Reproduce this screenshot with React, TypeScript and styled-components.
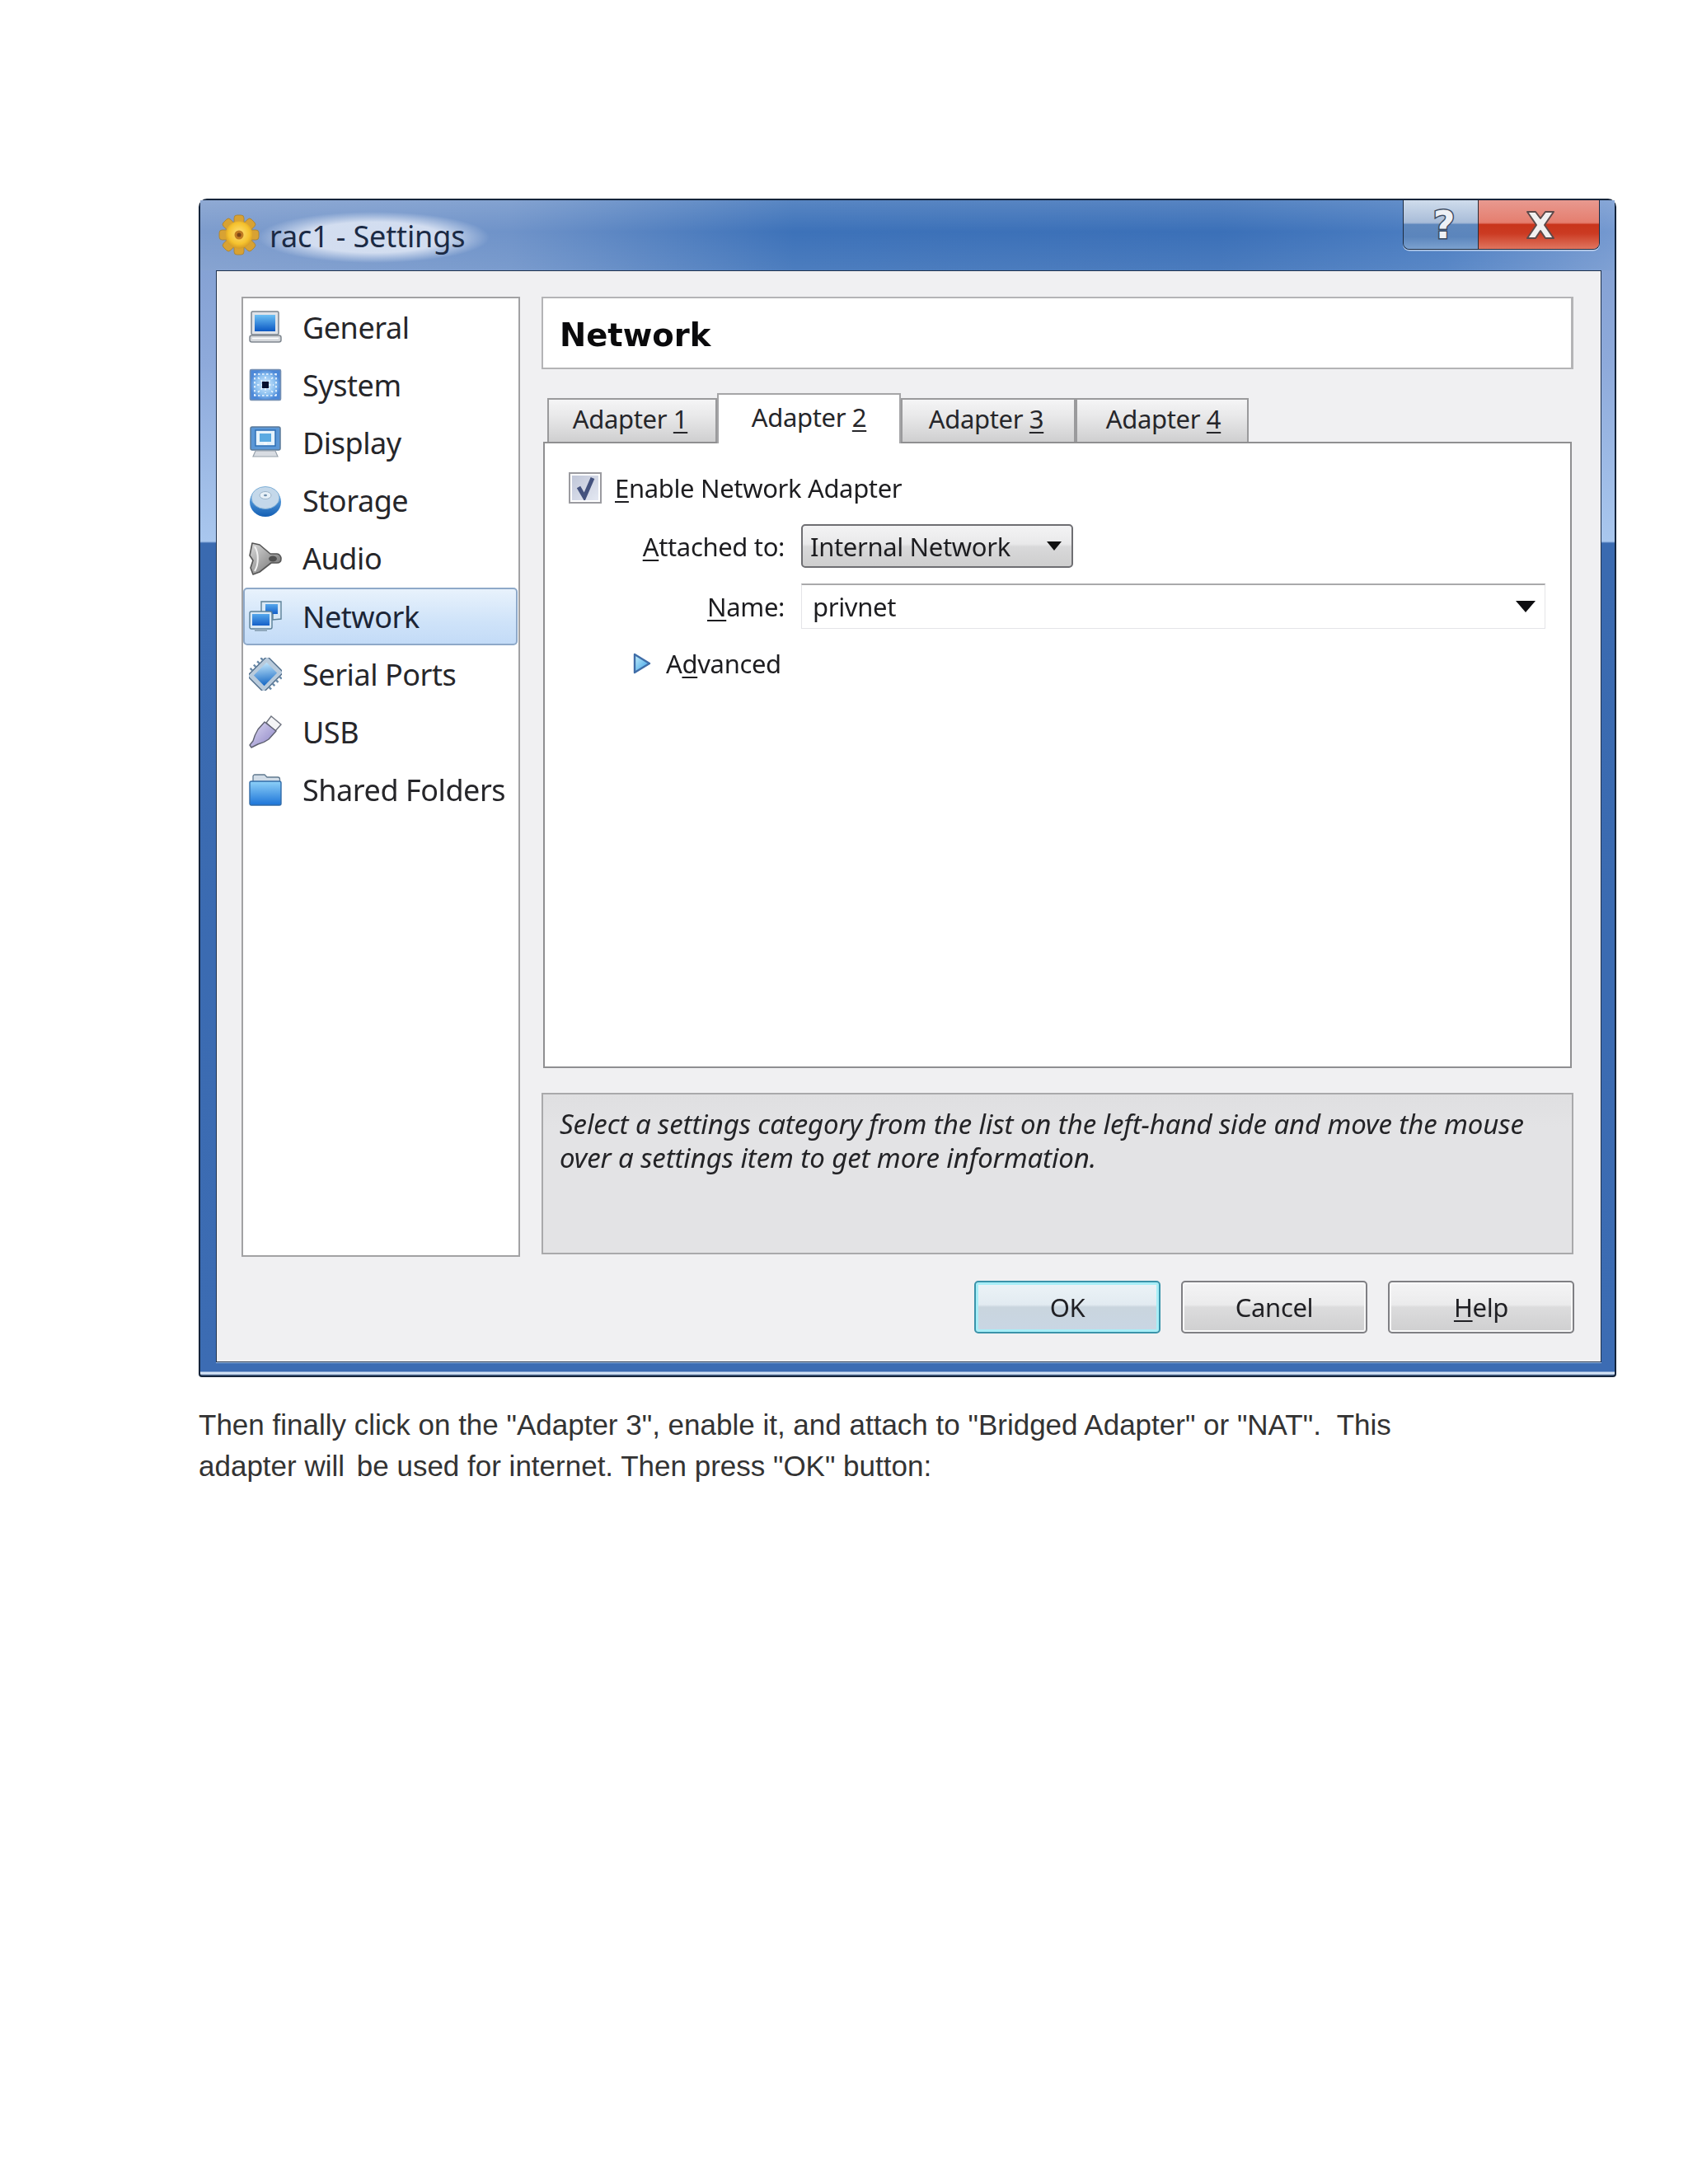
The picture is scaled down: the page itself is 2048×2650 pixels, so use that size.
import React from "react";
import styled, { createGlobalStyle, css } from "styled-components";

const Global = createGlobalStyle`
  html, body { margin: 0; padding: 0; background: #fff; }
  body { font-family: "Noto Sans", "Open Sans", sans-serif; }
  * { box-sizing: border-box; }
`;

const Page = styled.main`
  width: 2048px;
  height: 2650px;
  padding: 241px 87px 0 241px;
  background: #fff;
`;

const Dialog = styled.section`
  width: 1720px;
  height: 1430px;
  border: 2px solid #14243a;
  border-radius: 10px 10px 4px 4px;
  padding: 0 16px 16px 19px;
  display: flex;
  flex-direction: column;
  filter: blur(0.55px);
  background: linear-gradient(180deg, #7f9ccf 0, #8eaadb 200px, #a9c7ee 414px, #3a6ab0 416px, #3c6cb3 1421px, #d5e4f6 1422px, #d5e4f6 1424px, #2b4a78 1426px);
  color: #1d1d20;
`;

const TitleBar = styled.header`
  height: 85px;
  margin: 0 -16px 0 -19px;
  padding: 0 18px 0 22px;
  display: flex;
  justify-content: space-between;
  align-items: flex-start;
  background:
    linear-gradient(180deg, rgba(255,255,255,.14) 0, rgba(255,255,255,0) 45%, rgba(255,255,255,.08) 100%),
    linear-gradient(90deg, #7d9ccd 0, #6f93c9 22%, #3d72b9 42%, #3b70b8 72%, #4c7ec2 88%, #7599d0 100%);
`;

const TitleGroup = styled.div`
  display: flex;
  align-items: center;
  gap: 12px;
  height: 84px;
`;

const GearIcon = styled.svg`
  width: 50px;
  height: 50px;
`;

const TitleText = styled.h1`
  margin: 5px 0 0 -14px;
  padding: 8px 30px 10px 14px;
  font-size: 36px;
  line-height: 44px;
  font-weight: 400;
  letter-spacing: -0.15px;
  color: #1b2a44;
  background: radial-gradient(ellipse closest-side, rgba(226,233,246,.85) 60%, rgba(226,233,246,0) 100%);
`;

const WindowControls = styled.div`
  display: flex;
  height: 60px;
  border: 1.5px solid #1d2c42;
  border-top: none;
  border-radius: 0 0 8px 8px;
  overflow: hidden;
  box-shadow: 0 1.5px 0 rgba(220,232,248,.75);
`;

const ControlButton = styled.div<{ $close?: boolean }>`
  height: 100%;
  display: flex;
  align-items: center;
  justify-content: center;
  width: ${(p) => (p.$close ? 147 : 90)}px;
  ${(p) =>
    p.$close
      ? css`
          border-left: 1.5px solid #2b2c36;
          background: linear-gradient(180deg, #e8998f 0, #e57e6f 46%, #c9351c 50%, #cb3a22 68%, #e0755f 100%);
        `
      : css`
          background: linear-gradient(180deg, #cfdcec 0, #a8bcd8 46%, #5f88bd 50%, #5b85bc 75%, #7ba1cf 100%);
        `}
`;

const HelpGlyph = styled.span`
  font-family: "DejaVu Sans", sans-serif;
  font-weight: 700;
  font-size: 46px;
  line-height: 1;
  margin-left: 8px;
  color: #eef1f6;
  -webkit-text-stroke: 3px #3c4a60;
  paint-order: stroke fill;
`;

const CloseIcon = styled.svg`
  width: 38px;
  height: 36px;
  margin-left: 3px;
`;

const Client = styled.div`
  flex: 1;
  border: 1px solid #20324d;
  background: #f0f0f2;
  padding: 31px 33px 0 30px;
  display: flex;
  flex-direction: column;
  box-shadow: 0 1px 0 #9ec0e8;
`;

const Body = styled.div`
  display: grid;
  grid-template-columns: 338px 1252px;
  column-gap: 26px;
`;

const CategoryList = styled.nav`
  height: 1165px;
  background: #fff;
  border: 2px solid #a2a2a4;
  display: flex;
  flex-direction: column;
`;

const CategoryRow = styled.div<{ $active?: boolean }>`
  height: 70.2px;
  flex: none;
  display: flex;
  align-items: center;
  gap: 25px;
  padding-left: 5px;
  margin-right: 1px;
  font-size: 36px;
  letter-spacing: -0.45px;
  color: #26262a;
  border-radius: 5px;
  border: 2px solid transparent;
  ${(p) =>
    p.$active &&
    css`
      color: #1c2536;
      border-color: #8ea9c9;
      background: linear-gradient(180deg, #e8f2fc 0, #cfe3f9 60%, #c3dbf7 100%);
    `}
`;

const CategoryIcon = styled.svg`
  width: 40px;
  height: 40px;
  flex: none;
`;

const MainColumn = styled.div`
  display: flex;
  flex-direction: column;
`;

const PageHeader = styled.div`
  height: 88px;
  background: #fff;
  border: 2px solid #b4b4b6;
  border-right-width: 3px;
  padding: 5px 0 0 20px;
  display: flex;
  align-items: center;
`;

const PageHeading = styled.h2`
  margin: 0;
  font-family: "DejaVu Sans", sans-serif;
  font-weight: 700;
  font-size: 38.5px;
  color: #0a0a0c;
`;

const TabStrip = styled.div`
  margin: 29px 0 0 7px;
  height: 59px;
  display: flex;
  align-items: flex-end;
  position: relative;
  z-index: 1;
`;

const Tab = styled.div<{ $active?: boolean; $w: number; $shift?: number }>`
  width: ${(p) => p.$w}px;
  display: flex;
  justify-content: center;
  align-items: center;
  font-size: 31px;
  letter-spacing: -0.35px;
  color: #26262a;
  ${(p) =>
    p.$active
      ? css`
          height: 61px;
          margin-bottom: -2px;
          padding-bottom: 6px;
          background: #fff;
          border: 2px solid #a5a5a7;
          border-bottom: none;
        `
      : css`
          height: 53px;
          padding-bottom: 5px;
          padding-right: ${p.$shift ?? 0}px;
          padding-left: ${p.$shift ? 0 : 3}px;
          background: linear-gradient(180deg, #f5f5f6 0, #e8e8e9 40%, #cfcfd0 100%);
          border: 2px solid #9a9a9c;
          border-bottom: none;
        `}
`;

const Pane = styled.div`
  margin-left: 2px;
  width: 1248px;
  height: 760px;
  background: #fff;
  border: 2px solid #8f8f91;
  padding: 35px 20px 0 29px;
  display: flex;
  flex-direction: column;
`;

const CheckRow = styled.div`
  display: flex;
  align-items: center;
  gap: 16px;
  height: 38px;
  font-size: 31px;
  letter-spacing: -0.35px;
`;

const CheckBox = styled.span`
  width: 40px;
  height: 38px;
  flex: none;
  border: 2px solid #9b9ba0;
  padding: 2px;
  background: #fff;
  display: block;
`;

const CheckFill = styled.svg`
  width: 100%;
  height: 100%;
  display: block;
`;

const FormGrid = styled.div`
  display: grid;
  grid-template-columns: 262px 903px;
  column-gap: 20px;
  row-gap: 19px;
  margin-top: 25px;
  font-size: 31px;
  letter-spacing: -0.35px;
  align-items: center;
`;

const FieldLabel = styled.label`
  text-align: right;
`;

const Mnemonic = styled.span`
  text-decoration: underline;
  text-decoration-thickness: 2px;
  text-underline-offset: 4px;
`;

const ComboButton = styled.div`
  width: 330px;
  height: 53px;
  border: 2px solid #6e6e72;
  border-radius: 5px;
  background: linear-gradient(180deg, #f3f3f4 0, #e9e9ea 45%, #d9d9da 52%, #cecece 100%);
  padding: 0 12px 0 9px;
  display: flex;
  justify-content: space-between;
  align-items: center;
`;

const ComboField = styled.div`
  height: 55px;
  background: #fff;
  border: 1.5px solid #e4e4e8;
  border-top: 2px solid #a9a9ab;
  padding: 0 11px 0 13px;
  display: flex;
  justify-content: space-between;
  align-items: center;
`;

const ArrowIcon = styled.svg<{ $w: number; $h: number }>`
  width: ${(p) => p.$w}px;
  height: ${(p) => p.$h}px;
  flex: none;
`;

const AdvancedRow = styled.div`
  margin: 21px 0 0 78px;
  display: flex;
  align-items: center;
  gap: 18px;
  font-size: 31px;
  letter-spacing: -0.35px;
`;

const Triangle = styled.svg`
  width: 22px;
  height: 26px;
`;

const Description = styled.div`
  margin-top: 30px;
  height: 196px;
  background: linear-gradient(180deg, #dfdfe1 0, #e3e3e5 40px);
  border: 2px solid #a9a9ab;
  padding: 15px 20px 0 20px;
  font-size: 33px;
  line-height: 41px;
  font-style: italic;
  letter-spacing: -0.1px;
  color: #232326;
  white-space: nowrap;
`;

const ButtonRow = styled.div`
  margin-top: 29px;
  margin-right: -1px;
  display: flex;
  justify-content: flex-end;
  gap: 25px;
`;

const DialogButton = styled.button<{ $default?: boolean }>`
  width: 226px;
  flex: none;
  height: 64px;
  padding: 0;
  font: inherit;
  font-size: 31px;
  letter-spacing: -0.35px;
  color: #202024;
  border-radius: 5px;
  ${(p) =>
    p.$default
      ? css`
          border: 2px solid #3a93aa;
          background: linear-gradient(180deg, #ecf3f7 0, #e2ebf1 45%, #c9d5de 50%, #c9d6e4 100%);
          box-shadow: inset 0 0 0 3px #a8eef7;
        `
      : css`
          border: 2px solid #7f7f83;
          background: linear-gradient(180deg, #f4f4f5 0, #ebebec 45%, #dcdcdd 50%, #cfcfd0 100%);
          box-shadow: inset 0 0 0 2px #f8f8f8;
        `}
`;

const Caption = styled.div`
  margin-top: 33px;
  font-family: "Liberation Sans", Arial, sans-serif;
  font-size: 35px;
  line-height: 50px;
  color: #333;
`;

const CaptionLine = styled.p<{ $gap?: number }>`
  margin: 0;
  white-space: pre;
`;

const WordGap = styled.span`
  display: inline-block;
  width: 5px;
`;

const Gear = () => (
  <GearIcon viewBox="0 0 50 50">
    <defs>
      <radialGradient id="gearG" cx="50%" cy="45%" r="55%">
        <stop offset="0" stopColor="#ffe27a" />
        <stop offset="0.7" stopColor="#f5c22e" />
        <stop offset="1" stopColor="#d49a26" />
      </radialGradient>
    </defs>
    {[0, 45, 90, 135, 180, 225, 270, 315].map((a) => (
      <rect key={a} x="19" y="1" width="12" height="14" rx="3.5" transform={`rotate(${a} 25 25)`} fill="#d8a233" stroke="#a9802f" strokeWidth="0.8" />
    ))}
    <circle cx="25" cy="25" r="16.5" fill="url(#gearG)" />
    <circle cx="25" cy="25" r="5.5" fill="#c07a22" />
    <circle cx="25" cy="25" r="2.5" fill="#7a4416" />
  </GearIcon>
);

const Laptop = () => (
  <CategoryIcon viewBox="0 0 40 40">
    <defs>
      <linearGradient id="lapG" x1="0" y1="0" x2="0" y2="1">
        <stop offset="0" stopColor="#6cc0f4" />
        <stop offset="1" stopColor="#0b58c4" />
      </linearGradient>
    </defs>
    <rect x="3" y="1" width="33" height="28" rx="1.5" fill="#dfe3e8" stroke="#7a848e" strokeWidth="1.5" />
    <rect x="7" y="5" width="25" height="20" fill="url(#lapG)" />
    <rect x="1" y="30" width="38" height="8" rx="2.5" fill="#d4d7db" stroke="#808890" strokeWidth="1.5" />
    <path d="M4 33.5h32" stroke="#fff" strokeWidth="1.5" />
  </CategoryIcon>
);

const Chip = () => (
  <CategoryIcon viewBox="0 0 40 40">
    <defs>
      <radialGradient id="chipG">
        <stop offset="0" stopColor="#d6ecff" />
        <stop offset="0.65" stopColor="#8cc0f0" />
        <stop offset="1" stopColor="#4c88d8" />
      </radialGradient>
    </defs>
    <rect x="1.5" y="1.5" width="37" height="37" rx="1.5" fill="url(#chipG)" stroke="#7690b2" strokeWidth="1.6" />
    <g stroke="#f2f9ff" strokeWidth="1.6" strokeDasharray="2.5 2.5">
      <path d="M6 7h28M6 33h28M7 6v28M33 6v28" />
      <path d="M11 11l6 6M29 11l-6 6M11 29l6-6M29 29l-6-6M20 10v6M20 24v6M10 20h6M24 20h6" />
    </g>
    <rect x="16" y="16" width="8" height="8" fill="#06102e" />
  </CategoryIcon>
);

const Monitor = () => (
  <CategoryIcon viewBox="0 0 40 40">
    <rect x="2" y="1" width="36" height="28" rx="2" fill="#5b97d6" stroke="#5b7a98" strokeWidth="1.5" />
    <rect x="8" y="5" width="24" height="19" fill="#e6f3fc" stroke="#2f70b6" strokeWidth="1.5" />
    <rect x="13" y="9" width="14" height="10" fill="#5aaae2" />
    <path d="M18 20h4v3h-4z" fill="#f4f8fb" />
    <path d="M8 30h24l3 7H5z" fill="#d8dce2" stroke="#98a2ac" strokeWidth="1.2" />
  </CategoryIcon>
);

const Disk = () => (
  <CategoryIcon viewBox="0 0 40 40">
    <defs>
      <linearGradient id="diskG" x1="0" y1="0" x2="0" y2="1">
        <stop offset="0" stopColor="#7abcf0" />
        <stop offset="1" stopColor="#145fb4" />
      </linearGradient>
    </defs>
    <ellipse cx="20" cy="21" rx="19" ry="18" fill="url(#diskG)" />
    <ellipse cx="20" cy="16" rx="17" ry="13.5" fill="#c4d8ea" stroke="#7fb0d8" strokeWidth="1" />
    <ellipse cx="20" cy="13" rx="7" ry="4.5" fill="#e8f1f8" stroke="#9cb4ca" strokeWidth="1" />
    <ellipse cx="20" cy="13" rx="2" ry="1.3" fill="#6f8fac" />
  </CategoryIcon>
);

const Speaker = () => (
  <CategoryIcon viewBox="0 0 40 40">
    <defs>
      <linearGradient id="spkG" x1="0" y1="0" x2="1" y2="1">
        <stop offset="0" stopColor="#dcdcdc" />
        <stop offset="1" stopColor="#6a6a6a" />
      </linearGradient>
    </defs>
    <path d="M4 1l9 2 13 11h8c3 0 5 3 5 6s-2 5-5 5h-7L13 36l-8 3-3-8 3-9-4-6z" fill="url(#spkG)" stroke="#565656" strokeWidth="1.6" strokeLinejoin="round" />
    <path d="M7 5c5 8 5 22 0 30" fill="none" stroke="#f2f2f2" strokeWidth="2" />
    <ellipse cx="29" cy="20" rx="5" ry="3.5" fill="#505050" />
  </CategoryIcon>
);

const NetIcon = () => (
  <CategoryIcon viewBox="0 0 40 40">
    <defs>
      <linearGradient id="netG" x1="0" y1="0" x2="0" y2="1">
        <stop offset="0" stopColor="#55a7ec" />
        <stop offset="1" stopColor="#1560c8" />
      </linearGradient>
    </defs>
    <path d="M15 2h24v21l-10 1v-7l-14-1z" fill="#d9e9f6" stroke="#5c8098" strokeWidth="1.4" />
    <rect x="20" y="5" width="15" height="12" fill="url(#netG)" />
    <rect x="1" y="14" width="27" height="21" rx="2" fill="#d9e9f6" stroke="#5c8098" strokeWidth="1.4" />
    <rect x="4" y="17" width="21" height="14" fill="url(#netG)" />
    <path d="M7 35h15v3H7z" fill="#90a8bc" />
  </CategoryIcon>
);

const Serial = () => (
  <CategoryIcon viewBox="0 0 40 40">
    <defs>
      <linearGradient id="serG" x1="0" y1="0" x2="1" y2="1">
        <stop offset="0" stopColor="#bfe4fa" />
        <stop offset="1" stopColor="#1467c4" />
      </linearGradient>
    </defs>
    <g transform="rotate(45 20 20)">
      <rect x="6" y="3" width="28" height="34" rx="2" fill="#b9cbdc" stroke="#4f6c8a" strokeWidth="1.4" />
      <rect x="11" y="9" width="18" height="22" fill="url(#serG)" />
      <path d="M2 10h4M2 16h4M2 22h4M2 28h4M34 10h4M34 16h4M34 22h4M34 28h4" stroke="#6a8aa8" strokeWidth="2.4" />
    </g>
  </CategoryIcon>
);

const Usb = () => (
  <CategoryIcon viewBox="0 0 40 40">
    <defs>
      <linearGradient id="usbG" x1="0" y1="0" x2="1" y2="1">
        <stop offset="0" stopColor="#e0dcf4" />
        <stop offset="1" stopColor="#8a82c4" />
      </linearGradient>
    </defs>
    <path d="M27 1l12 10-7 8-11-10z" fill="#f4f4f6" stroke="#6f7480" strokeWidth="1.4" />
    <path d="M19 8l14 11-9 10c-4 3-9 5-13 6L3 39l-2-3 4-5c1-4 3-9 6-14z" fill="url(#usbG)" stroke="#5e6070" strokeWidth="1.4" strokeLinejoin="round" />
  </CategoryIcon>
);

const Folder = () => (
  <CategoryIcon viewBox="0 0 40 40">
    <defs>
      <linearGradient id="folG" x1="0" y1="0" x2="0" y2="1">
        <stop offset="0" stopColor="#8dd0f8" />
        <stop offset="1" stopColor="#1c74d8" />
      </linearGradient>
    </defs>
    <path d="M7 1h12l3 3h13c1.5 0 2.5 1 2.5 2.5V12H5V3c0-1 1-2 2-2z" fill="#d2dde8" stroke="#60798f" strokeWidth="1.3" />
    <rect x="1" y="9" width="38" height="29" rx="2" fill="url(#folG)" stroke="#326ca8" strokeWidth="1.4" />
  </CategoryIcon>
);

const categories: { label: string; icon: React.ReactNode; active?: boolean }[] = [
  { label: "General", icon: <Laptop /> },
  { label: "System", icon: <Chip /> },
  { label: "Display", icon: <Monitor /> },
  { label: "Storage", icon: <Disk /> },
  { label: "Audio", icon: <Speaker /> },
  { label: "Network", icon: <NetIcon />, active: true },
  { label: "Serial Ports", icon: <Serial /> },
  { label: "USB", icon: <Usb /> },
  { label: "Shared Folders", icon: <Folder /> },
];

const tabs = [
  { n: "1", w: 206, shift: 5 },
  { n: "2", w: 223, active: true },
  { n: "3", w: 212, shift: 5 },
  { n: "4", w: 210 },
];

export default function App() {
  return (
    <Page>
      <Global />
      <Dialog>
        <TitleBar>
          <TitleGroup>
            <Gear />
            <TitleText>rac1 - Settings</TitleText>
          </TitleGroup>
          <WindowControls>
            <ControlButton>
              <HelpGlyph>?</HelpGlyph>
            </ControlButton>
            <ControlButton $close>
              <CloseIcon viewBox="0 0 38 36">
                <path d="M3 2h10l6 8 6-8h10L24 18l11 16H25l-6-9-6 9H3l11-16z" fill="#f1f0f0" stroke="#5e4a4a" strokeWidth="2" strokeLinejoin="round" />
              </CloseIcon>
            </ControlButton>
          </WindowControls>
        </TitleBar>
        <Client>
          <Body>
            <CategoryList>
              {categories.map((c) => (
                <CategoryRow key={c.label} $active={c.active}>
                  {c.icon}
                  {c.label}
                </CategoryRow>
              ))}
            </CategoryList>
            <MainColumn>
              <PageHeader>
                <PageHeading>Network</PageHeading>
              </PageHeader>
              <TabStrip>
                {tabs.map((t) => (
                  <Tab key={t.n} $active={t.active} $w={t.w} $shift={t.shift}>
                    <span>
                      Adapter <Mnemonic>{t.n}</Mnemonic>
                    </span>
                  </Tab>
                ))}
              </TabStrip>
              <Pane>
                <CheckRow>
                  <CheckBox>
                    <CheckFill viewBox="0 0 32 30">
                      <defs>
                        <linearGradient id="chkG" x1="0" y1="0" x2="1" y2="1">
                          <stop offset="0" stopColor="#c0c6d8" />
                          <stop offset="1" stopColor="#e4e8f2" />
                        </linearGradient>
                      </defs>
                      <rect width="32" height="30" fill="url(#chkG)" />
                      <path d="M8 14l7 12L25 3" fill="none" stroke="#44527e" strokeWidth="5" />
                    </CheckFill>
                  </CheckBox>
                  <span>
                    <Mnemonic>E</Mnemonic>nable Network Adapter
                  </span>
                </CheckRow>
                <FormGrid>
                  <FieldLabel>
                    <Mnemonic>A</Mnemonic>ttached to:
                  </FieldLabel>
                  <ComboButton>
                    <span>Internal Network</span>
                    <ArrowIcon $w={18} $h={11} viewBox="0 0 18 11">
                      <path d="M0 0h18L9 11z" fill="#111" />
                    </ArrowIcon>
                  </ComboButton>
                  <FieldLabel>
                    <Mnemonic>N</Mnemonic>ame:
                  </FieldLabel>
                  <ComboField>
                    <span>privnet</span>
                    <ArrowIcon $w={24} $h={14} viewBox="0 0 24 14">
                      <path d="M0 0h24L12 14z" fill="#0d0d10" />
                    </ArrowIcon>
                  </ComboField>
                </FormGrid>
                <AdvancedRow>
                  <Triangle viewBox="0 0 22 26">
                    <defs>
                      <linearGradient id="triG" x1="0" y1="0" x2="1" y2="1">
                        <stop offset="0" stopColor="#c8f0fa" />
                        <stop offset="1" stopColor="#2f9ae6" />
                      </linearGradient>
                    </defs>
                    <path d="M2 2l18 11L2 24z" fill="url(#triG)" stroke="#3f6da8" strokeWidth="2.4" strokeLinejoin="round" />
                  </Triangle>
                  <span>
                    A<Mnemonic>d</Mnemonic>vanced
                  </span>
                </AdvancedRow>
              </Pane>
              <Description>
                Select a settings category from the list on the left-hand side and move the mouse
                <br />
                over a settings item to get more information.
              </Description>
            </MainColumn>
          </Body>
          <ButtonRow>
            <DialogButton $default>OK</DialogButton>
            <DialogButton>Cancel</DialogButton>
            <DialogButton>
              <Mnemonic>H</Mnemonic>elp
            </DialogButton>
          </ButtonRow>
        </Client>
      </Dialog>
      <Caption>
        <CaptionLine>{'Then finally click on the "Adapter 3", enable it, and attach to "Bridged Adapter" or "NAT".  This'}</CaptionLine>
        <CaptionLine>
          adapter will <WordGap />
          {'be used for internet. Then press "OK" button:'}
        </CaptionLine>
      </Caption>
    </Page>
  );
}
